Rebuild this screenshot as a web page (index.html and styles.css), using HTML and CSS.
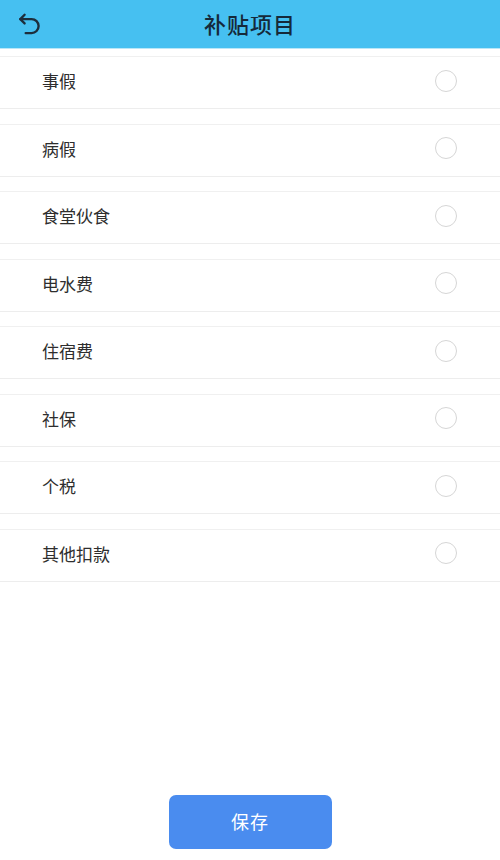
FILE: index.html
```html
<!DOCTYPE html>
<html lang="zh">
<head>
<meta charset="utf-8">
<link rel="stylesheet" href="styles.css">
</head>
<body>
<div class="page">
  <header class="topbar">
    <span class="back">
      <svg width="28" height="28" viewBox="0 0 26 26" fill="none" stroke="#1d2e3d" stroke-width="2.2" stroke-linecap="round" stroke-linejoin="round">
        <path d="M8 3.5 L4 7.5 L8 11.5"/>
        <path d="M4 7.5 H14.5 a6.5 6.5 0 0 1 0 13 H9"/>
      </svg>
    </span>
    <h1 class="title">补贴项目</h1>
  </header>
  <ul class="list">
    <li class="item"><span class="label">事假</span><span class="radio"></span></li>
    <li class="item"><span class="label">病假</span><span class="radio"></span></li>
    <li class="item"><span class="label">食堂伙食</span><span class="radio"></span></li>
    <li class="item"><span class="label">电水费</span><span class="radio"></span></li>
    <li class="item"><span class="label">住宿费</span><span class="radio"></span></li>
    <li class="item"><span class="label">社保</span><span class="radio"></span></li>
    <li class="item"><span class="label">个税</span><span class="radio"></span></li>
    <li class="item"><span class="label">其他扣款</span><span class="radio"></span></li>
  </ul>
  <div class="footer">
    <button class="save">保存</button>
  </div>
</div>
</body>
</html>
```

FILE: styles.css
```css
* { box-sizing: border-box; }
html, body {
  margin: 0;
  padding: 0;
  background: #ffffff;
  font-family: "Noto Sans CJK SC", "Noto Sans", sans-serif;
}
.page {
  width: 500px;
  height: 860px;
  display: flex;
  flex-direction: column;
}
.topbar {
  height: 49px;
  background: #46c0f1;
  display: flex;
  align-items: center;
  justify-content: center;
  position: relative;
  border-bottom: 1px solid #b9e7f8;
}
.back {
  position: absolute;
  left: 16px;
  top: 11px;
  width: 28px;
  height: 28px;
  display: block;
}
.back svg { display: block; }
.title {
  margin: 0;
  font-size: 22px;
  font-weight: 500;
  color: #15293a;
  letter-spacing: 1px;
  line-height: 1;
  margin-top: -2px;
}
.list {
  list-style: none;
  margin: 7px 0 0;
  padding: 0;
  display: flex;
  flex-direction: column;
  gap: 14.5px;
}
.item {
  height: 53px;
  border-top: 1px solid #f0f0f0;
  border-bottom: 1px solid #ededed;
  display: flex;
  align-items: center;
  justify-content: space-between;
  padding: 0 43px 4px 42px;
}
.label {
  font-size: 17px;
  color: #2e2e2e;
  line-height: 1;
}
.radio {
  width: 22px;
  height: 22px;
  border: 1.5px solid #d6d6d6;
  border-radius: 50%;
}
.footer {
  margin-top: auto;
  display: flex;
  justify-content: center;
  padding-bottom: 11px;
}
.save {
  width: 163px;
  height: 54px;
  border: none;
  border-radius: 7px;
  background: #4a8cef;
  color: #ffffff;
  font-family: "Noto Sans CJK SC", "Noto Sans", sans-serif;
  font-size: 18px;
  letter-spacing: 1px;
  padding: 0 0 2px;
}
```
